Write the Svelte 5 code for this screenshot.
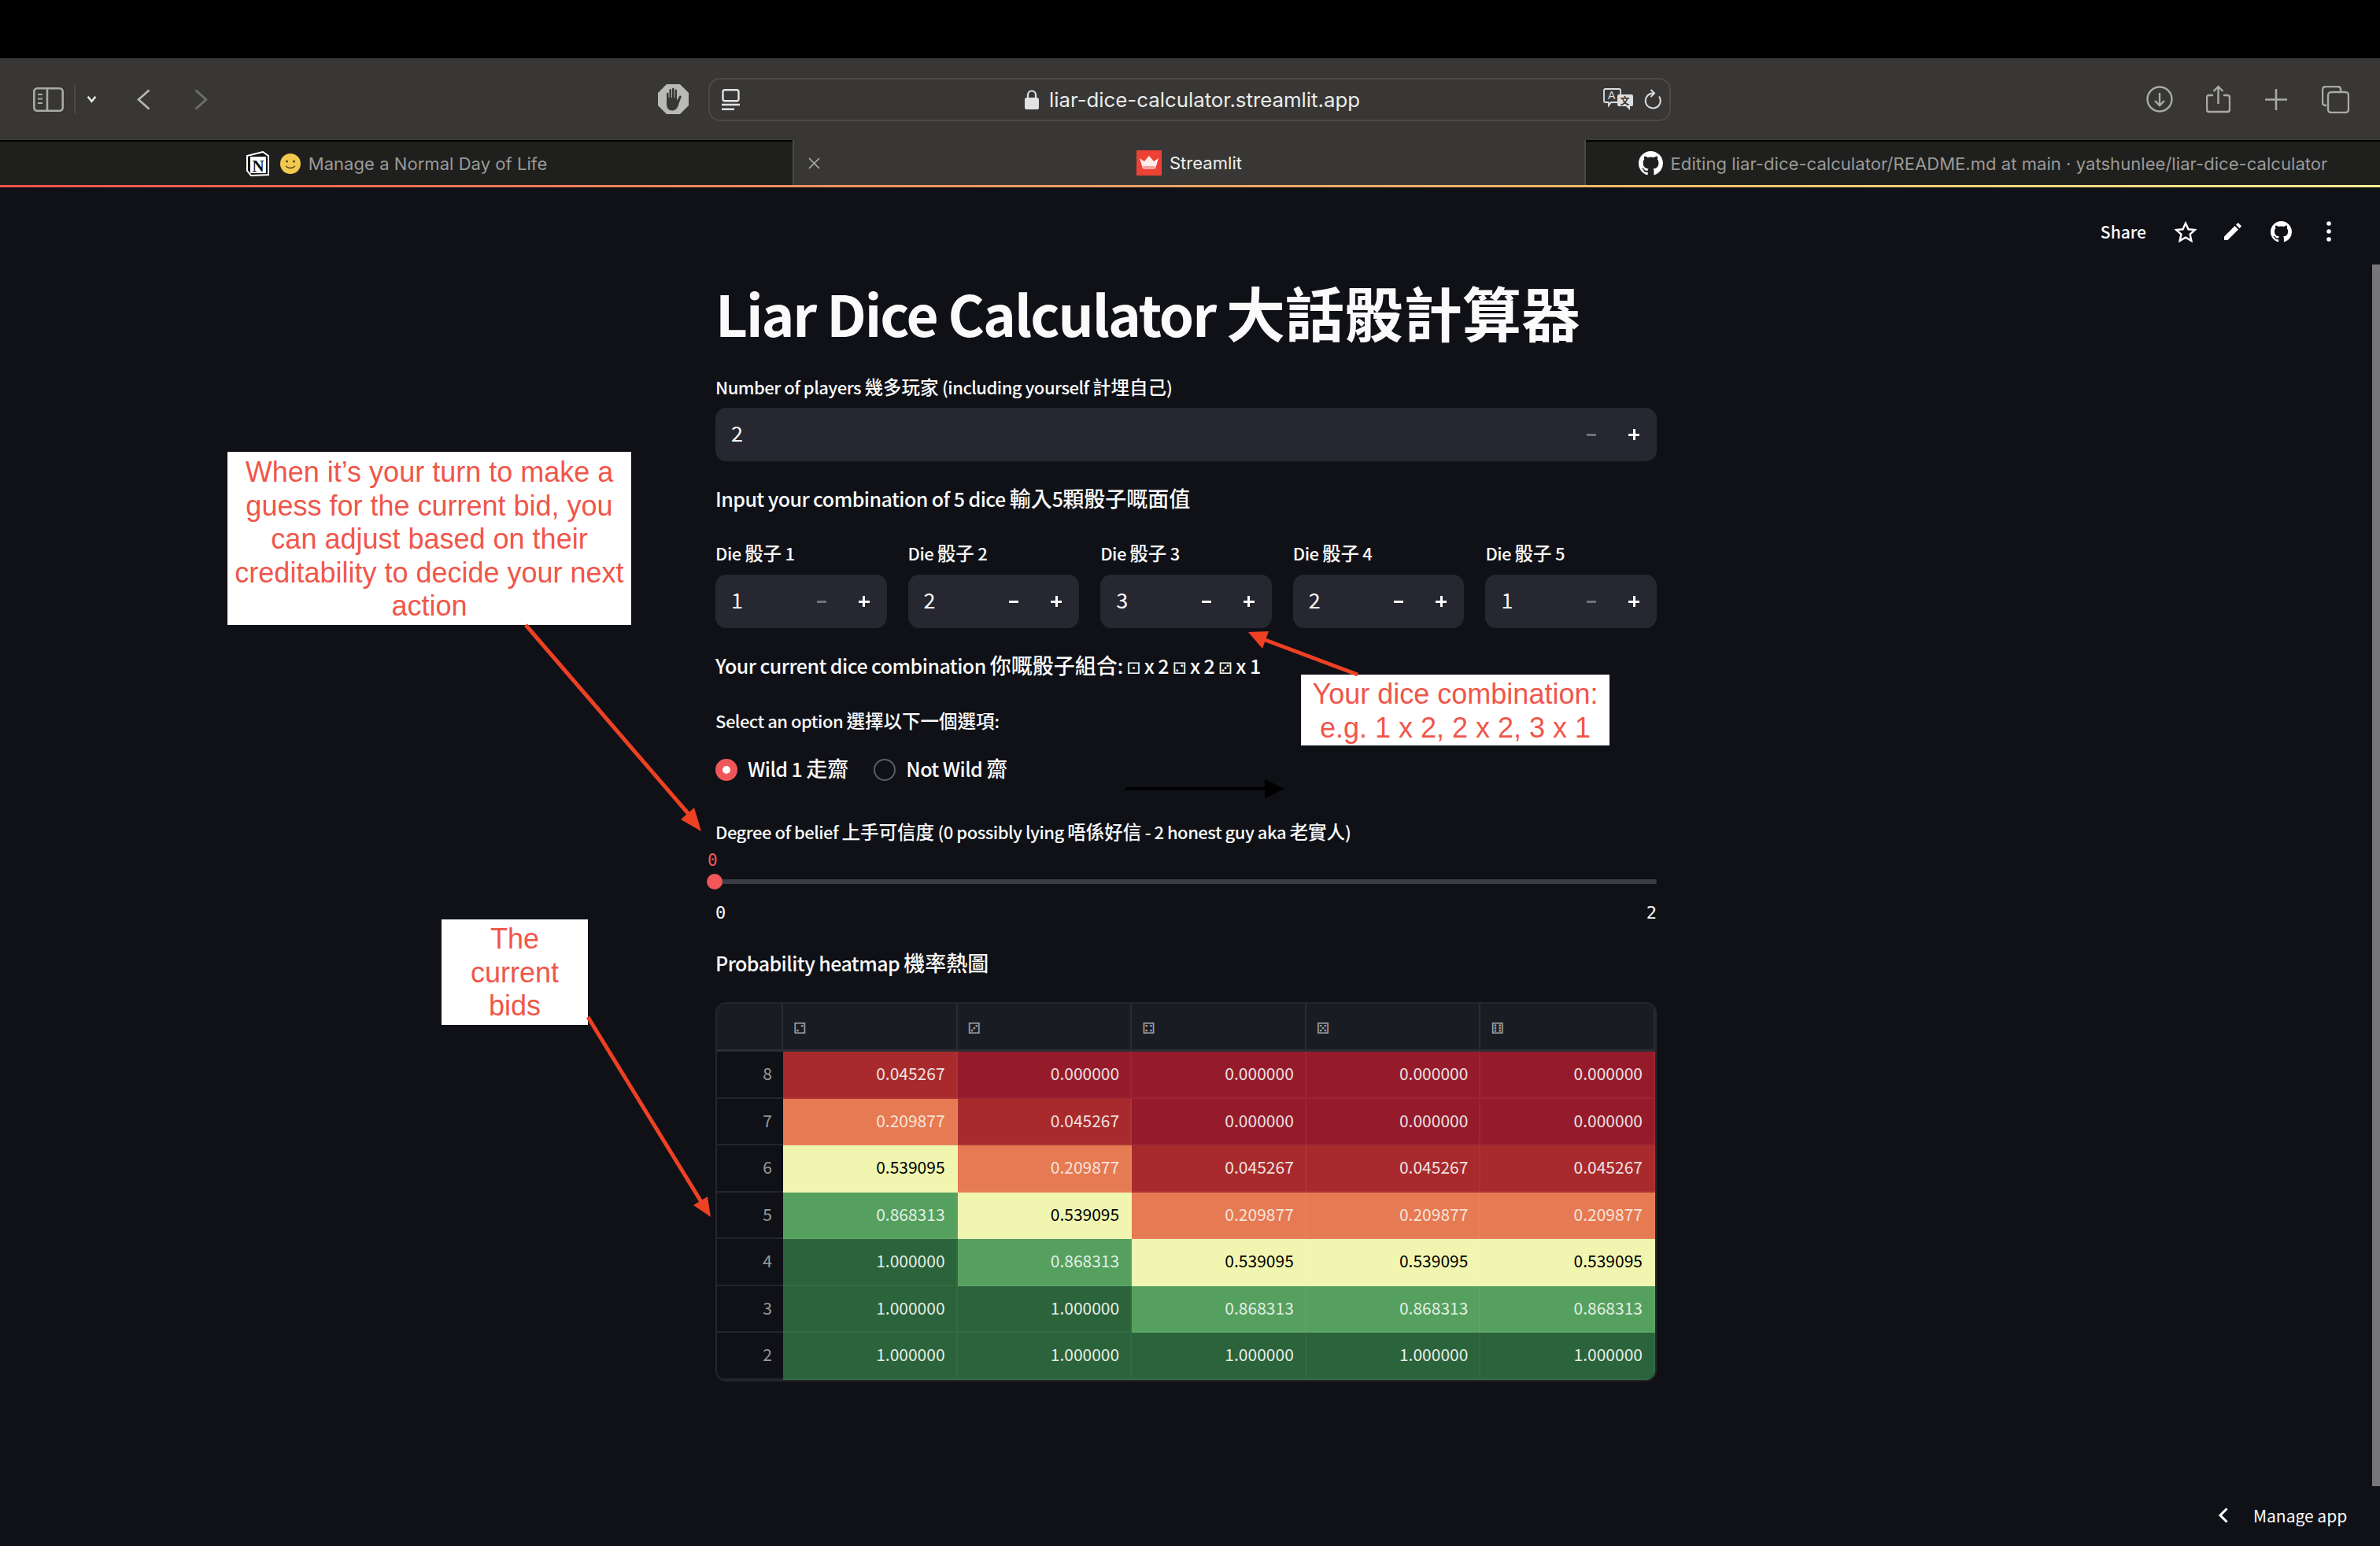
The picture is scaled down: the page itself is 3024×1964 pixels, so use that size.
<script>
  const dice = [1, 2, 3, 2, 1];
  const faces = ['⚁', '⚂', '⚃', '⚄', '⚅'];
  const rows = [
    ['8', [1, 0, 0, 0, 0]],
    ['7', [2, 1, 0, 0, 0]],
    ['6', [3, 2, 1, 1, 1]],
    ['5', [4, 3, 2, 2, 2]],
    ['4', [5, 4, 3, 3, 3]],
    ['3', [5, 5, 4, 4, 4]],
    ['2', [5, 5, 5, 5, 5]]
  ];
  const values = ['0.000000', '0.045267', '0.209877', '0.539095', '0.868313', '1.000000'];
  const gh = 'M8 0C3.58 0 0 3.58 0 8c0 3.54 2.29 6.53 5.47 7.59.4.07.55-.17.55-.38 0-.19-.01-.82-.01-1.49-2.01.37-2.53-.49-2.69-.94-.09-.23-.48-.94-.82-1.13-.28-.15-.68-.52-.01-.53.63-.01 1.08.58 1.23.82.72 1.21 1.87.87 2.33.66.07-.52.28-.87.51-1.07-1.78-.2-3.64-.89-3.64-3.95 0-.87.31-1.59.82-2.15-.08-.2-.36-1.02.08-2.12 0 0 .67-.21 2.2.82.64-.18 1.32-.27 2-.27.68 0 1.36.09 2 .27 1.53-1.04 2.2-.82 2.2-.82.44 1.1.16 1.92.08 2.12.51.56.82 1.27.82 2.15 0 3.07-1.87 3.75-3.65 3.95.29.25.54.73.54 1.48 0 1.07-.01 1.93-.01 2.2 0 .21.15.46.55.38A8.013 8.013 0 0016 8c0-4.42-3.58-8-8-8z';
  const isCjk = (s) => /[\u3400-\u9fff]/.test(s);
  const runs = (s) => s.match(/[\u3400-\u9fff]+|[^\u3400-\u9fff]+/g);
</script>

{#snippet mixed(s)}{#each runs(s) as r}{#if isCjk(r)}<span class="cjk">{r}</span>{:else}{r}{/if}{/each}{/snippet}

{#snippet stepper(value, disabled, label)}
  <div class="field">
    <div class="label">{@render mixed(label)}</div>
    <div class="number">
      <span class="num-value">{value}</span>
      <span class="step" class:off={disabled}><i class="minus"></i></span>
      <span class="step"><i class="plus"></i></span>
    </div>
  </div>
{/snippet}

<div class="page">
  <div class="black"></div>

  <div class="toolbar">
    <svg class="i-side" viewBox="0 0 39 31" fill="none" stroke="#a9a9a8" stroke-width="2.6"><rect x="1.3" y="1.3" width="36.4" height="28.4" rx="4"/><path d="M18 1.5v28"/><path d="M6 9h6M6 14.500h6M6 20h6" stroke-width="2.200"/></svg>
    <span class="t-sep"></span>
    <svg class="i-drop" viewBox="0 0 12 9" fill="none" stroke="#e6e6e6" stroke-width="2.4"><path d="M1.500 1.500 6 7l4.500-5.500"/></svg>
    <svg class="i-back" viewBox="0 0 17 27" fill="none" stroke="#b5b5b4" stroke-width="2.8"><path d="M15.500 1.500 2 13.500l13.500 12"/></svg>
    <svg class="i-fwd" viewBox="0 0 17 27" fill="none" stroke="#6f6f6d" stroke-width="2.8"><path d="M1.500 1.500 15 13.500l-13.500 12"/></svg>
    <svg class="i-hand" viewBox="0 0 39 38"><path fill="#b9b9b8" d="M11 0h17l11 11v16L28 38H11L0 27V11z"/><path fill="#383735" d="M11 19V12q0-1.500 1.200-1.500t1.300 1.500v5h1V7.500q0-1.400 1.200-1.400t1.300 1.400V17h1V6q0-1.500 1.300-1.500T20.500 6v11h1V8q0-1.400 1.200-1.400T24 8v12l1-.500 2-4q.8-1.400 2-.9t.5 2l-3 8q-1.500 8-7.500 8.900-7 .4-8-7z"/></svg>
    <div class="urlbar">
      <svg class="i-reader" viewBox="0 0 23 27" fill="none" stroke="#e2e2e2" stroke-width="2.400"><rect x="1.500" y="1.200" width="20" height="14" rx="2.500"/><path d="M0 20h23M0 25.800h16"/></svg>
      <div class="url">
        <svg class="i-lock" viewBox="0 0 18 25"><path fill="none" stroke="#e2e2e2" stroke-width="2.200" d="M4 11V6.500a5 5 0 0 1 10 0V11"/><rect y="10" width="18" height="15" rx="2.500" fill="#e2e2e2"/></svg>
        <span>liar-dice-calculator.streamlit.app</span>
      </div>
      <svg class="i-trans" viewBox="0 0 38 28"><path d="M3 1h17q2 0 2 2v13q0 2-2 2H10l-3 4v-4H3q-2 0-2-2V3q0-2 2-2z" fill="#383735" stroke="#dedede" stroke-width="1.800"/><text x="6" y="14" font-size="14" fill="#dedede" font-family="Liberation Sans">A</text><path d="M20 8h16q2 0 2 2v11q0 2-2 2h-2v5l-5-5h-9q-2 0-2-2V10q0-2 2-2z" fill="#dedede"/><text x="21.500" y="21" font-size="12" fill="#383735" font-weight="700" font-family="Noto Sans CJK TC">文</text></svg>
      <svg class="i-reload" viewBox="0 0 23 27" fill="none" stroke="#dedede" stroke-width="2"><path d="M13 5.500A9.500 9.500 0 1 0 20 9.500"/><path d="M9.500 1 14 5.500 9.500 10"/></svg>
    </div>
    <div class="t-right">
      <svg class="i-dl" viewBox="0 0 34 34" fill="none" stroke="#a9a9a8" stroke-width="2.400"><circle cx="17" cy="17" r="15.500"/><path d="M17 9v16M11 19l6 6 6-6"/></svg>
      <svg class="i-share" viewBox="0 0 31 36" fill="none" stroke="#a9a9a8" stroke-width="2.400"><path d="M9 13H4q-3 0-3 3v15q0 3 3 3h23q3 0 3-3V16q0-3-3-3h-5"/><path d="M15.500 24V2M9.500 8l6-6 6 6"/></svg>
      <svg class="i-plus" viewBox="0 0 28 27" fill="none" stroke="#a9a9a8" stroke-width="2.600"><path d="M14 0v27M0 13.500h28"/></svg>
      <svg class="i-tabs" viewBox="0 0 35 35" fill="none" stroke="#a9a9a8" stroke-width="2.400"><path d="M6 25H5q-4 0-4-4V5q0-4 4-4h15q4 0 4 4v2"/><rect x="8" y="8" width="26" height="26" rx="4"/></svg>
    </div>
  </div>

  <div class="tabs">
    <div class="tab dim">
      <svg class="i-notion" viewBox="0 0 30 32"><path fill="#111" stroke="#fff" stroke-width="2" d="M2 6 22 1l7 5v24L7 31 2 25z"/><path fill="#fff" d="M6 7h20v21H6z"/><text x="16" y="26" font-size="21" text-anchor="middle" font-family="Liberation Serif" font-weight="700" fill="#111">N</text></svg>
      <svg class="i-smile" viewBox="0 0 26 26"><circle cx="13" cy="13" r="13" fill="#f2c94f"/><circle cx="8.500" cy="10" r="1.500" fill="#5b4316"/><circle cx="17.500" cy="10" r="1.500" fill="#5b4316"/><path d="M7 16q6 5 12 0" fill="none" stroke="#5b4316" stroke-width="1.500"/></svg>
      <span>Manage a Normal Day of Life</span>
    </div>
    <div class="tab active">
      <svg class="close" viewBox="0 0 15 15" fill="none" stroke="#ababab" stroke-width="1.700"><path d="M1 1l13 13M14 1 1 14"/></svg>
      <svg class="i-st" viewBox="0 0 32 32"><rect width="32" height="32" fill="#ee4136"/><path fill="#fff" opacity=".9" d="M4 10l6 4 6-7 6 7 6-4-4 13H8z"/><path fill="#f3a29b" d="M8 20h16l-1 4H9z"/></svg>
      <span>Streamlit</span>
    </div>
    <div class="tab dim">
      <svg class="i-gh" viewBox="0 0 16 16"><path fill="#fff" d={gh}/></svg>
      <span>Editing liar-dice-calculator/README.md at main · yatshunlee/liar-dice-calculator</span>
    </div>
  </div>
  <div class="grad"></div>

  <div class="body">
    <div class="main">
      <header class="app-head">
        <span class="share">Share</span>
        <svg class="a-star" viewBox="0 0 28 27" fill="none" stroke="#fff" stroke-width="2.400"><path d="M14 2.500l3.500 7.800 8.300.8-6.200 5.600 1.800 8.200-7.400-4.300-7.400 4.300 1.800-8.200L2.200 11.100l8.300-.8z"/></svg>
        <svg class="a-pen" viewBox="0 0 23 22"><path fill="#fff" d="M0 22v-4.500L13.500 4l4.500 4.500L4.500 22zM15 2.500 17 .6q.7-.6 1.400 0l3.100 3.100q.6.7 0 1.400L19.500 7z"/></svg>
        <svg class="a-gh" viewBox="0 0 16 16"><path fill="#fff" d={gh}/></svg>
        <svg class="a-dots" viewBox="0 0 6 26"><circle cx="3" cy="3" r="2.800" fill="#fff"/><circle cx="3" cy="13" r="2.800" fill="#fff"/><circle cx="3" cy="23" r="2.800" fill="#fff"/></svg>
      </header>

      <section class="col">
        <h1>{@render mixed('Liar Dice Calculator 大話骰計算器')}</h1>
        <div class="players">
          {@render stepper(2, true, 'Number of players 幾多玩家 (including yourself 計埋自己)')}
        </div>
        <p class="text t-input">{@render mixed('Input your combination of 5 dice 輸入5顆骰子嘅面值')}</p>
        <div class="dice">
          {#each dice as d, i}
            {@render stepper(d, d === 1, `Die 骰子 ${i + 1}`)}
          {/each}
        </div>
        <p class="text t-current">{@render mixed('Your current dice combination 你嘅骰子組合: ')}<span class="die">⚀</span> x 2 <span class="die">⚁</span> x 2 <span class="die">⚂</span> x 1</p>
        <div class="label t-select">{@render mixed('Select an option 選擇以下一個選項:')}</div>
        <div class="radios">
          <span class="radio on"></span><span class="r-text">{@render mixed('Wild 1 走齋')}</span>
          <span class="radio"></span><span class="r-text">{@render mixed('Not Wild 齋')}</span>
        </div>
        <div class="label t-degree">{@render mixed('Degree of belief 上手可信度 (0 possibly lying 唔係好信 - 2 honest guy aka 老實人)')}</div>
        <div class="slider">
          <div class="s-value">0</div>
          <div class="s-track"><span class="thumb"></span></div>
          <div class="s-ticks"><span>0</span><span>2</span></div>
        </div>
        <p class="text t-prob">{@render mixed('Probability heatmap 機率熱圖')}</p>
        <div class="table">
          <div class="th idx"></div>
          {#each faces as f}<div class="th"><span class="face">{f}</span></div>{/each}
          {#each rows as [n, cells]}
            <div class="idx td-i">{n}</div>
            {#each cells as c}<div class="td c{c}">{values[c]}</div>{/each}
          {/each}
        </div>
      </section>

      <div class="manage">
        <svg class="m-chev" viewBox="0 0 13 20" fill="none" stroke="#fff" stroke-width="3"><path d="M11.500 1.500 3 10l8.500 8.500"/></svg>
        <span>Manage app</span>
      </div>
    </div>
    <div class="scroll"><div class="thumb-bar"></div></div>
  </div>

  <div class="note n1">When it’s your turn to make a guess for the current bid, you can adjust based on their creditability to decide your next action</div>
  <div class="note n2">Your dice combination:<br/>e.g. 1 x 2, 2 x 2, 3 x 1</div>
  <div class="note n3">The current bids</div>

  <svg class="arrows" viewBox="0 0 3024 1964">
    <g stroke="#ee4023" stroke-width="5" fill="#ee4023">
      <path d="M668 794 880 1040"/><path stroke="none" d="M891 1056 865 1041 882 1026z"/>
      <path d="M747 1292 893 1530"/><path stroke="none" d="M903 1546 881 1531 899 1520z"/>
      <path d="M1725 857 1605 812"/><path stroke="none" d="M1586 803 1612 802 1604 824z"/>
    </g>
    <path d="M1430 1000h177v-10l25 12-25 12v-10h-177z" fill="#000"/>
  </svg>
</div>

<style>
  :global(body) { margin: 0; background: #0f1117; }
  .page {
    position: relative; width: 3024px; height: 1964px; overflow: hidden;
    background: #0f1117; color: #fafafa;
    font-family: "Noto Sans CJK TC", "Noto Sans", sans-serif;
  }
  .black { height: 74px; background: #000; }

  .toolbar { height: 104px; background: #383735; display: flex; align-items: center; padding-left: 42px; box-sizing: border-box; }
  .toolbar svg { flex: none; }
  .i-side { width: 39px; height: 31px; }
  .t-sep { width: 2px; height: 36px; background: #4c4b49; margin-left: 13px; }
  .i-drop { width: 13px; height: 10px; margin-left: 14px; }
  .i-back { width: 17px; height: 27px; margin-left: 51px; }
  .i-fwd { width: 17px; height: 27px; margin-left: 56px; }
  .i-hand { width: 39px; height: 38px; margin-left: 572px; }
  .urlbar {
    width: 1223px; height: 55px; margin-left: 25px; box-sizing: border-box;
    border: 2px solid #4b4a48; border-radius: 15px;
    display: flex; align-items: center; padding-left: 15px; position: relative;
  }
  .i-reader { width: 23px; height: 27px; }
  .url {
    position: absolute; left: 400px; top: 0; bottom: 0; display: flex; align-items: center; gap: 13px;
    font: 400 25.800px "Inter", sans-serif; color: #ececec;
  }
  .i-lock { width: 18px; height: 25px; }
  .i-trans { width: 38px; height: 28px; margin-left: auto; }
  .i-reload { width: 23px; height: 27px; margin: 0 10px 0 13px; }
  .t-right { margin-left: auto; display: flex; align-items: center; padding-right: 39px; }
  .i-dl { width: 34px; height: 34px; }
  .i-share { width: 31px; height: 36px; margin-left: 42px; }
  .i-plus { width: 28px; height: 27px; margin-left: 44px; }
  .i-tabs { width: 35px; height: 35px; margin-left: 44px; }

  .tabs { height: 57px; display: grid; grid-template-columns: 1007px 1008px 1fr; background: #000; box-sizing: border-box; }
  .tab {
    position: relative; display: flex; align-items: center; justify-content: center; gap: 10px;
    font: 400 22px "Inter", sans-serif; letter-spacing: .05px; margin-top: 2px;
  }
  .tab.dim { background: #1f1f1d; color: #9a9a98; }
  .tab.active { background: #383735; color: #f0f0f0; border-left: 2px solid #4b4a48; border-right: 2px solid #4b4a48; box-sizing: border-box; margin-top: 0; }
  .i-notion { width: 30px; height: 32px; margin-right: 4px; }
  .i-smile { width: 26px; height: 26px; }
  .close { position: absolute; left: 18px; top: 22px; width: 15px; height: 15px; }
  .i-st { width: 32px; height: 32px; }
  .i-gh { width: 31px; height: 31px; }
  .grad { height: 3px; background: linear-gradient(90deg, #f0524a, #ef8f5e 33%, #f0b868 66%, #f5ee90); }

  .body { display: flex; height: 1726px; }
  .main { flex: 1; position: relative; min-width: 0; }
  .scroll { width: 10px; padding-top: 98px; box-sizing: border-box; }
  .thumb-bar { height: 1552px; background: #77777a; }

  .app-head { height: 112px; margin-bottom: 2px; display: flex; align-items: center; justify-content: flex-end; padding-right: 52px; box-sizing: border-box; }
  .share { font-size: 21px; font-weight: 500; margin-right: 36px; }
  .a-star { width: 28px; height: 27px; margin-right: 35px; }
  .a-pen { width: 23px; height: 22px; margin-right: 36px; }
  .a-gh { width: 27px; height: 27px; margin-right: 44px; }
  .a-dots { width: 6px; height: 26px; }

  .col { width: 1196px; margin: 0 auto; }
  .cjk { letter-spacing: 0; }
  h1 { margin: 0; height: 92px; line-height: 88px; font-size: 71px; letter-spacing: -2.100px; font-weight: 700; white-space: nowrap; color: #fafafa; }
  h1 .cjk { font-size: 75px; letter-spacing: 0; }
  .label { height: 38px; line-height: 34px; font-size: 22px; letter-spacing: -.5px; font-weight: 500; white-space: nowrap; }
  .label .cjk { font-size: 23.500px; letter-spacing: 0; }
  .dice .label { line-height: 36px; }
  .text { margin: 0; height: 40px; line-height: 36px; font-size: 25px; letter-spacing: -.56px; font-weight: 500; white-space: nowrap; }
  .text .cjk { font-size: 27px; letter-spacing: 0; }
  .field { display: flex; flex-direction: column; gap: 6px; min-width: 0; }
  .players { margin-top: 30px; }
  .t-input { margin-top: 29px; }
  .dice { margin-top: 29px; display: grid; grid-template-columns: repeat(5, 1fr); column-gap: 27px; }
  .dice .field { gap: 8px; }
  .number { height: 68px; background: #262730; border-radius: 14px; display: flex; align-items: center; padding: 0 2px 0 20px; box-sizing: border-box; }
  .num-value { flex: 1; font-size: 27px; line-height: 64px; height: 68px; }
  .step { width: 54px; height: 68px; display: flex; align-items: center; justify-content: center; color: #fff; }
  .step.off { color: #70717b; }
  .minus { display: block; width: 12px; height: 3px; background: currentColor; }
  .plus {
    display: block; width: 14px; height: 14px;
    background: linear-gradient(currentColor, currentColor) center / 14px 3px no-repeat,
                linear-gradient(currentColor, currentColor) center / 3px 14px no-repeat;
  }
  .t-current { margin-top: 29px; }
  .die { font-family: "DejaVu Sans", sans-serif; font-size: 20px; }
  .t-select { margin-top: 31px; }
  .radios { margin-top: 22px; height: 40px; display: flex; align-items: center; font-size: 25px; letter-spacing: -.56px; font-weight: 500; }
  .radios .cjk { font-size: 27px; letter-spacing: 0; }
  .radio { width: 28px; height: 28px; border-radius: 50%; box-sizing: border-box; border: 2px solid #5a5c66; background: #0f1117; }
  .radio.on { border: 9px solid #f0565a; background: #fff; }
  .r-text { margin-left: 13px; margin-right: 32px; white-space: nowrap; line-height: 36px; height: 40px; }
  .t-degree { margin-top: 41px; }
  .slider { height: 103px; }
  .s-value { height: 31px; margin-left: -10px; color: #f0565a; font: 400 21px/33px "DejaVu Sans Mono", monospace; }
  .s-track { height: 6px; margin: 9px 0; background: #3a3c46; border-radius: 3px; position: relative; }
  .thumb { position: absolute; left: -11px; top: -7px; width: 20px; height: 20px; border-radius: 50%; background: #f0565a; }
  .s-ticks { display: flex; justify-content: space-between; height: 28px; margin-top: 22px; font: 400 22px/29px "DejaVu Sans Mono", monospace; }
  .t-prob { margin-top: 25px; }

  .table {
    margin-top: 28px; width: 1196px; box-sizing: border-box;
    border: 2px solid #24262d; border-radius: 14px; overflow: hidden;
    display: grid; grid-template-columns: 84px repeat(5, 1fr); grid-template-rows: 61px repeat(7, 59.500px);
  }
  .th { background: #1a1c24; border-right: 2px solid #2a2c33; border-bottom: 3px solid #2c2e35; box-sizing: border-box; display: flex; align-items: center; padding: 3px 0 0 13px; }
  .th:last-of-type { border-right: 0; }
  .face { font: 400 19px "DejaVu Sans", sans-serif; color: #a3a3a3; }
  .td-i { display: flex; align-items: center; justify-content: flex-end; padding: 0 14px 3px 0; color: #9a9a9a; background: #0f1117; font-size: 21px; border-bottom: 2px solid #24262d; box-sizing: border-box; }
  .td { display: flex; align-items: center; justify-content: flex-end; padding: 0 14px 3px 0; font-size: 21px; box-sizing: border-box; border-right: 2px solid rgba(255, 255, 255, .05); border-bottom: 2px solid rgba(255, 255, 255, .05); }
  .c0 { background: #951b2b; color: #ece0e2; }
  .c1 { background: #a92a2c; color: #f0e2e2; }
  .c2 { background: #e67a52; color: #f7e4dc; }
  .c3 { background: #f0f6b0; color: #000; }
  .c4 { background: #55a05f; color: #e2efe4; }
  .c5 { background: #2b633a; color: #e6eee8; }

  .manage { position: absolute; left: 2818px; top: 1677px; display: flex; align-items: center; height: 20px; }
  .m-chev { width: 13px; height: 20px; margin-right: 32px; }
  .manage span { font-size: 21px; white-space: nowrap; }

  .note {
    position: absolute; background: #fff; color: #f0564a; text-align: center; box-sizing: border-box;
    font: 400 36px/42.500px "Liberation Sans", Arial, sans-serif;
  }
  .n1 { left: 289px; top: 574px; width: 513px; height: 220px; padding: 5px 6px 0; }
  .n2 { left: 1653px; top: 857px; width: 392px; height: 90px; padding-top: 4px; white-space: nowrap; }
  .n3 { left: 561px; top: 1168px; width: 186px; height: 134px; padding: 4px 30px 0; }
  .arrows { position: absolute; inset: 0; width: 3024px; height: 1964px; pointer-events: none; }
</style>
